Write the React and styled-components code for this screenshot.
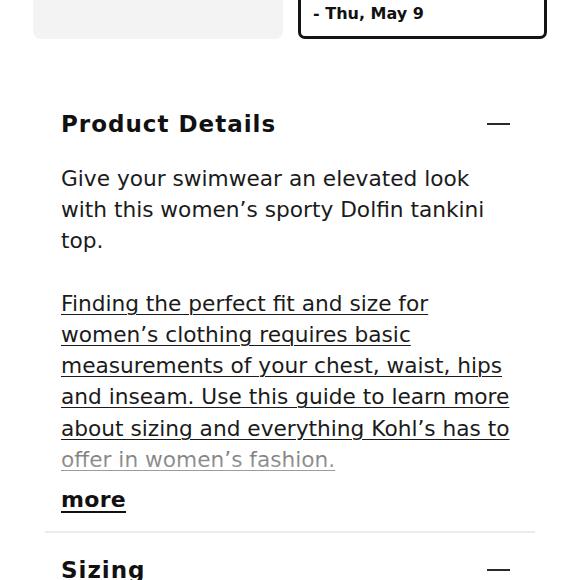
import React from "react";
import styled, { createGlobalStyle } from "styled-components";

const Global = createGlobalStyle`
  html, body { margin: 0; padding: 0; background: #fff; }
  body { font-family: "DejaVu Sans", "Noto Sans", sans-serif; color: #1b1b1b; overflow: hidden; }
`;

const Page = styled.div`
  width: 580px;
  margin-top: -40px;
`;

const TopRow = styled.div`
  display: flex;
  gap: 15px;
  padding: 0 33px;
`;

const GrayCard = styled.div`
  width: 250px;
  height: 79px;
  background: #f3f3f3;
  border-radius: 8px;
`;

const DeliveryBox = styled.div`
  box-sizing: border-box;
  width: 249px;
  height: 79px;
  border: 3px solid #141414;
  border-radius: 7px;
  padding: 16px 12px 0 12px;
  font-weight: 700;
  font-size: 16px;
  line-height: 23px;
  color: #111;
`;

const Section = styled.section`
  margin: 0 45px;
  border-bottom: ${(p) => (p.$divider ? "2px solid #ebebeb" : "none")};
`;

const AccordionHeader = styled.div`
  display: flex;
  align-items: center;
  justify-content: space-between;
  padding: ${(p) => p.$top}px 25px ${(p) => p.$bottom}px 16px;
`;

const Title = styled.h2`
  margin: 0;
  font-size: 23px;
  line-height: 30px;
  font-weight: 700;
  letter-spacing: 1px;
  color: #111;
`;

const Minus = styled.span`
  display: block;
  width: 23px;
  height: 2px;
  background: #2a2a2a;
`;

const Body = styled.div`
  padding: 0 17px 0 16px;
`;

const Clamp = styled.div`
  position: relative;
  font-size: 21.7px;
  line-height: 31.2px;
  max-height: 312px;
  overflow: hidden;
  &::after {
    content: "";
    position: absolute;
    left: 0;
    right: 0;
    bottom: 0;
    height: 34px;
    background: linear-gradient(rgba(255, 255, 255, 0.35), rgba(255, 255, 255, 0.6));
  }
`;

const Para = styled.p`
  margin: 0 0 31.2px 0;
`;

const GuideLink = styled.a`
  color: #1b1b1b;
  text-decoration: underline;
  text-underline-offset: 3px;
  text-decoration-thickness: 1px;
`;

const More = styled.a`
  display: inline-block;
  margin-top: 10px;
  margin-bottom: 16px;
  font-size: 22px;
  line-height: 30px;
  font-weight: 700;
  letter-spacing: 0.3px;
  color: #111;
  text-decoration: underline;
  text-underline-offset: 4px;
  text-decoration-thickness: 2px;
`;

export default function App() {
  return (
    <Page>
      <Global />
      <TopRow>
        <GrayCard />
        <DeliveryBox>
          Arrives Mon, May 6
          <br />- Thu, May 9
        </DeliveryBox>
      </TopRow>
      <Section $divider>
        <AccordionHeader $top={70} $bottom={24}>
          <Title>Product Details</Title>
          <Minus />
        </AccordionHeader>
        <Body>
          <Clamp>
            <Para>
              Give your swimwear an elevated look with this women’s sporty
              Dolfin tankini top.
            </Para>
            <GuideLink href="#">
              Finding the perfect fit and size for women’s clothing requires
              basic measurements of your chest, waist, hips and inseam. Use
              this guide to learn more about sizing and everything Kohl’s has
              to offer in women’s fashion.
            </GuideLink>
          </Clamp>
          <More href="#">more</More>
        </Body>
      </Section>
      <Section>
        <AccordionHeader $top={22} $bottom={20}>
          <Title>Sizing</Title>
          <Minus />
        </AccordionHeader>
      </Section>
    </Page>
  );
}
